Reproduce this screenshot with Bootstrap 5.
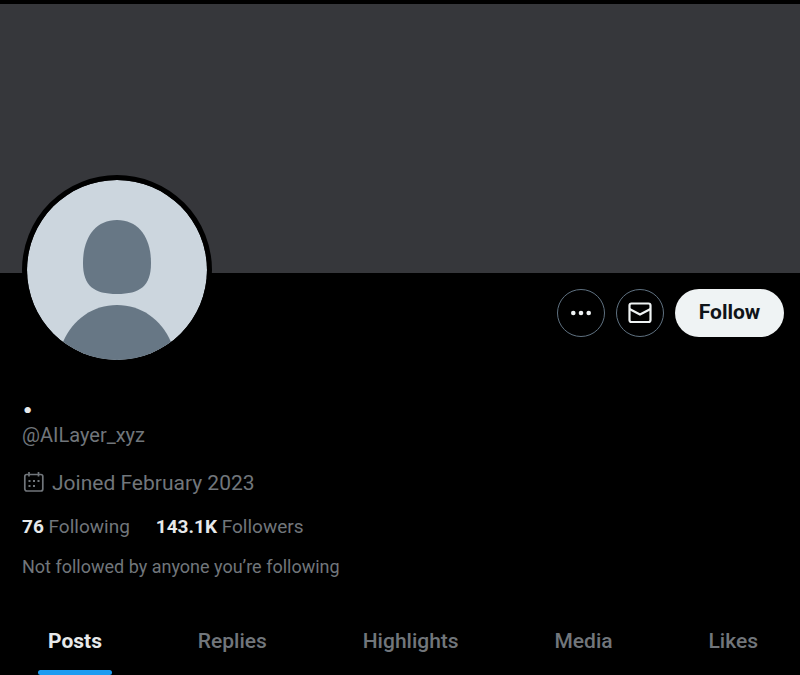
<!DOCTYPE html>
<html lang="en">
<head>
<meta charset="utf-8">
<meta name="viewport" content="width=device-width, initial-scale=1">
<title>@AILayer_xyz</title>
<link href="https://cdn.jsdelivr.net/npm/bootstrap@5.3.0/dist/css/bootstrap.min.css" rel="stylesheet">
<style>
  body { background: #000; color: #e7e9ea; font-family: Roboto, "Liberation Sans", sans-serif; font-size: 21px; line-height: 28px; }
  a, a:hover { color: inherit; text-decoration: none; }
  .banner { height: 273px; background: #36373b; border-top: 4px solid #000; }
  .profile { padding: 0 16px 0 22px; }
  .avatar { width: 190px; height: 190px; margin-top: -98px; border: 5px solid #000; background: #000; }
  .actions { padding-top: 16px; gap: 11px; }
  .round-btn { width: 48px; height: 48px; border: 1px solid #5f7180; color: #eff3f4; background: none; }
  .follow-btn, .follow-btn:hover { height: 48px; width: 109px; background: #eff3f4; color: #0f1419; font-weight: 700; font-size: 21px; }
  .muted { color: #71767b; }
  .display-name { font-size: 40px; line-height: 28px; font-weight: 700; margin-top: 21px; }
  .handle { font-size: 20px; margin-top: 7px; }
  .joined { margin-top: 20px; gap: 7px; }
  .counts { font-size: 19px; margin-top: 16px; gap: 26px; }
  .counts strong { color: #e7e9ea; }
  .note { font-size: 18px; margin-top: 12px; }
  .tabs { margin-top: 46px; padding: 0 32px 0 38px; font-weight: 500; }
  .tab { padding: 0 10px; }
  .tab-active { color: #e7e9ea; font-weight: 700; }
  .tab-bar { height: 5px; margin: 15px -10px 0; background: #1d9bf0; }
</style>
</head>
<body>
<header class="banner"></header>
<main>
  <section class="profile">
    <div class="d-flex justify-content-between align-items-start">
      <div class="avatar rounded-circle overflow-hidden flex-shrink-0">
        <svg class="d-block w-100 h-100" viewBox="0 0 180 180" role="img" aria-label="Default profile picture">
          <circle cx="90" cy="90" r="90" fill="#ccd6de"/>
          <path fill="#677785" d="M90 40C68 40 56 58 56 83C56 106 67 114 90 114C113 114 124 106 124 83C124 58 112 40 90 40Z"/>
          <path fill="#677785" d="M36 162C46 139 66 125 90 125C114 125 134 139 144 162A90 90 0 0 1 36 162Z"/>
        </svg>
      </div>
      <div class="actions d-flex">
        <button type="button" class="round-btn rounded-circle d-flex align-items-center justify-content-center p-0" aria-label="More">
          <svg width="26" height="26" viewBox="0 0 26 26" fill="currentColor"><circle cx="5.300" cy="13" r="2.300"/><circle cx="13" cy="13" r="2.300"/><circle cx="20.700" cy="13" r="2.300"/></svg>
        </button>
        <button type="button" class="round-btn rounded-circle d-flex align-items-center justify-content-center p-0" aria-label="Message">
          <svg width="26" height="26" viewBox="0 0 26 26" fill="none" stroke="currentColor" stroke-width="2.200"><rect x="2.500" y="3.500" width="21" height="18.500" rx="2"/><path d="M2.500 9L13 14.500L23.500 9"/></svg>
        </button>
        <button type="button" class="follow-btn btn rounded-pill border-0 p-0">Follow</button>
      </div>
    </div>
    <h1 class="display-name mb-0">.</h1>
    <div class="handle muted">@AILayer_xyz</div>
    <div class="joined muted d-flex align-items-center">
      <svg width="23" height="24" viewBox="0 0 23 24" fill="none" stroke="currentColor" stroke-width="1.700" aria-hidden="true"><rect x="2.800" y="3.500" width="18" height="16.500" rx="2"/><path d="M7 1V5.500M16.500 1V5.500"/><g fill="currentColor" stroke="none"><path d="M6.500 9h2v2h-2zM11 9h2v2h-2zM15.500 9h2v2h-2zM6.500 14h2v2h-2zM11 14h2v2h-2z"/></g></svg>
      <span>Joined February 2023</span>
    </div>
    <div class="counts muted d-flex">
      <a href="#following"><strong>76</strong> Following</a>
      <a href="#followers"><strong>143.1K</strong> Followers</a>
    </div>
    <div class="note muted">Not followed by anyone you’re following</div>
  </section>
  <nav class="tabs muted d-flex justify-content-between" aria-label="Profile sections">
    <a class="tab tab-active" href="#posts" aria-current="page">Posts<span class="tab-bar d-block rounded-pill"></span></a>
    <a class="tab" href="#replies">Replies</a>
    <a class="tab" href="#highlights">Highlights</a>
    <a class="tab" href="#media">Media</a>
    <a class="tab" href="#likes">Likes</a>
  </nav>
</main>
<script src="https://cdn.jsdelivr.net/npm/bootstrap@5.3.0/dist/js/bootstrap.bundle.min.js"></script>
</body>
</html>
